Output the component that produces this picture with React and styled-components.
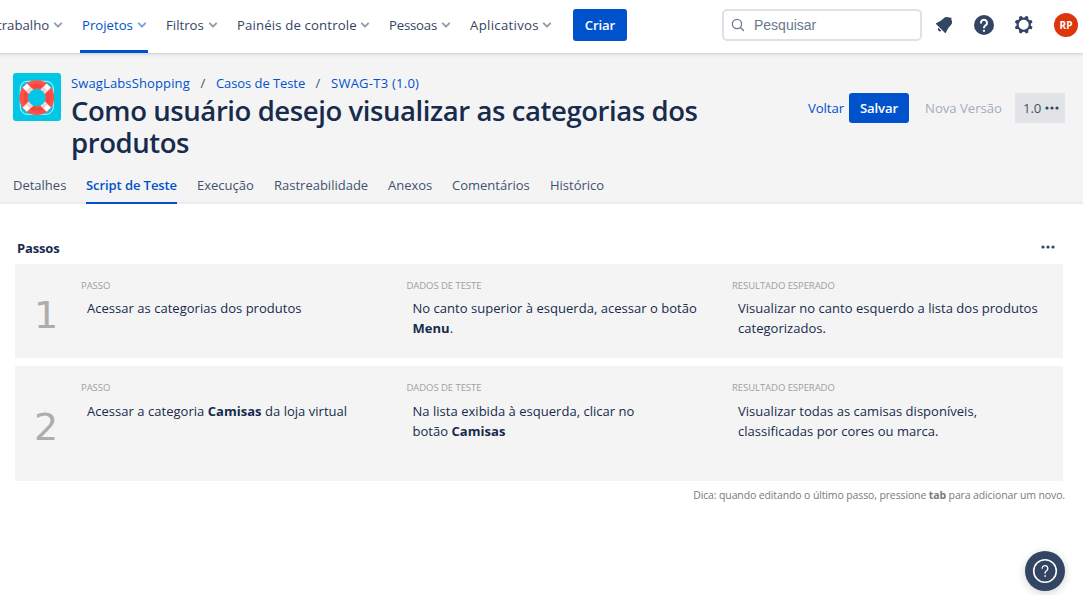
import React from "react";
import styled, { createGlobalStyle } from "styled-components";

const GlobalStyle = createGlobalStyle`
  * { box-sizing: border-box; }
  html, body { margin: 0; background: #fff; }
  body { font-family: "Open Sans", "Noto Sans", sans-serif; font-size: 13px; color: #172b4d; overflow: hidden; }
  button { font: inherit; border: 0; padding: 0; background: none; }
`;

const Page = styled.div`
  position: relative;
  width: 1083px;
  height: 595px;
  background: #fff;
  overflow: hidden;
`;

const TopBar = styled.header`
  display: flex;
  height: 53px;
  position: relative;
  background: #fff;
  box-shadow: 0 1px 0 #d4d7dd, 0 2px 3px rgba(9, 30, 66, 0.1);
`;

const Nav = styled.nav`
  display: flex;
  margin-left: -5px;
`;

const NavItem = styled.a`
  display: flex;
  align-items: center;
  width: ${(p) => p.$w}px;
  flex: none;
  padding: 0 1px 4px 2px;
  font-size: 13.2px;
  font-weight: 500;
  letter-spacing: ${(p) => p.$ls || 0}px;
  margin-right: 16px;
  white-space: nowrap;
  color: ${(p) => (p.$active ? "#0052cc" : "#344563")};
  box-shadow: ${(p) => (p.$active ? "inset 0 -3px 0 #0052cc" : "none")};
  svg { margin-left: auto; color: ${(p) => (p.$active ? "#7aa3e3" : "#969eae")}; }
`;

const Primary = styled.button`
  flex: none;
  width: ${(p) => p.$w}px;
  height: ${(p) => p.$h}px;
  border-radius: 3px;
  background: #0052cc;
  color: #fff;
  font-size: 13.2px;
  font-weight: 600;
  letter-spacing: ${(p) => p.$ls || 0}px;
`;

const CreateSlot = styled.div`
  padding: 9px 0 0 4px;
`;

const Tools = styled.div`
  display: flex;
  align-items: center;
  margin-left: auto;
  padding: 0 5px 3px 0;
`;

const Search = styled.div`
  display: flex;
  align-items: center;
  gap: 9px;
  width: 200px;
  height: 32px;
  margin-right: 10px;
  padding-left: 7px;
  border: 2px solid #dfe1e6;
  border-radius: 5px;
  color: #6b778c;
  font: 14px "Liberation Sans", Arial, sans-serif;
`;

const ToolIcon = styled.span`
  display: flex;
  justify-content: center;
  width: 24px;
  margin-right: 16px;
  color: #344563;
`;

const Avatar = styled.span`
  display: flex;
  align-items: center;
  justify-content: center;
  width: 24px;
  height: 24px;
  margin-left: 2px;
  border-radius: 50%;
  background: #de350b;
  color: #fff;
  font-size: 10px;
  font-weight: 700;
`;

const Head = styled.section`
  height: 151px;
  display: flex;
  flex-direction: column;
  background: #f4f4f4;
  border-bottom: 2px solid #ebecf0;
`;

const HeadMain = styled.div`
  display: flex;
  flex: none;
  padding: 20px 18px 0 13px;
  height: 111px;
`;

const HeadText = styled.div`
  width: 660px;
  margin-left: 10px;
`;

const Crumbs = styled.div`
  display: flex;
  line-height: 20px;
  height: 22px;
`;

const Crumb = styled.a`
  width: ${(p) => p.$w}px;
  white-space: nowrap;
  color: #0052cc;
  letter-spacing: ${(p) => p.$ls || 0}px;
`;

const Slash = styled.span`
  width: 26px;
  text-align: center;
  color: #42526e;
`;

const Title = styled.h1`
  margin: 0;
  font-size: 27.5px;
  line-height: 32px;
  font-weight: 600;
  letter-spacing: -0.42px;
`;

const Actions = styled.div`
  display: flex;
  align-items: center;
  height: 30px;
  margin: 20px 0 0 auto;
  font-size: 13.2px;
`;

const ActionText = styled.span`
  color: ${(p) => (p.$muted ? "#a5adba" : "#0052cc")};
  letter-spacing: ${(p) => p.$ls || 0}px;
  white-space: nowrap;
  width: ${(p) => p.$w}px;
  margin-left: ${(p) => p.$ml || 0}px;
`;

const Version = styled.button`
  display: flex;
  align-items: center;
  gap: 4px;
  width: 50px;
  height: 30px;
  padding-left: 8px;
  background: #e2e3e6;
  color: #42526e;
  letter-spacing: -0.1px;
`;

const Tabs = styled.div`
  display: flex;
  align-items: flex-start;
  gap: 20px;
  padding-left: 13px;
  height: 38px;
  flex: none;
`;

const Tab = styled.a`
  width: ${(p) => p.$w}px;
  height: 40px;
  line-height: 42px;
  white-space: nowrap;
  letter-spacing: ${(p) => p.$ls || 0}px;
  font-weight: ${(p) => (p.$active ? 600 : 400)};
  color: ${(p) => (p.$active ? "#0052cc" : "#42526e")};
  border-bottom: ${(p) => (p.$active ? "2px solid #0052cc" : "0")};
`;

const Body = styled.main`
  padding: 34px 20px 0 15px;
`;

const SectionHead = styled.div`
  display: flex;
  align-items: center;
  justify-content: space-between;
  height: 20px;
  margin-bottom: 6px;
  padding: 0 8px 0 2px;
  font-weight: 700;
  font-size: 13px;
  letter-spacing: -0.15px;
  svg { margin-bottom: 2px; }
`;

const Card = styled.article`
  display: flex;
  height: ${(p) => p.$h}px;
  margin-bottom: 8px;
  background: #f4f4f4;
`;

const Num = styled.div`
  width: 66px;
  padding: 7px 4px 0 0;
  display: flex;
  align-items: center;
  justify-content: center;
  flex: none;
  font-family: "DejaVu Sans", sans-serif;
  font-size: 38px;
  font-weight: 400;
  color: #adadad;
`;

const Col = styled.div`
  width: 325.5px;
  flex: none;
  padding-top: 15px;
`;

const Label = styled.div`
  height: 14px;
  line-height: 14px;
  font-size: 9.5px;
  color: #a0a0a0;
  letter-spacing: -0.06px;
`;

const Line = styled.div`
  padding-left: 6px;
  line-height: 20px;
  white-space: nowrap;
  letter-spacing: 0.03px;
`;

const Lines = styled.div`
  margin-top: ${(p) => p.$mt}px;
`;

const Hint = styled.p`
  margin: -1px -2px 0 0;
  text-align: right;
  font-size: 10.5px;
  color: #7a7a7a;
  letter-spacing: -0.125px;
`;

const HelpButton = styled.button`
  position: absolute;
  right: 18px;
  bottom: 4px;
  width: 40px;
  height: 40px;
  display: flex;
  border-radius: 50%;
  background: #344563;
  box-shadow: 0 2px 8px rgba(9, 30, 66, 0.2);
`;

const Logo = styled.svg`
  flex: none;
`;

const Chevron = () => (
  <svg width="10" height="8" viewBox="0 0 10 8" fill="none" stroke="currentColor" strokeWidth="2" strokeLinecap="round" strokeLinejoin="round">
    <path d="M1.8 2.4 5 5.6 8.2 2.4" />
  </svg>
);

const Dots = () => (
  <svg width="14" height="4" viewBox="0 0 14 4" fill="#344563">
    <circle cx="2" cy="2" r="1.6" /><circle cx="7" cy="2" r="1.6" /><circle cx="12" cy="2" r="1.6" />
  </svg>
);

const SearchIcon = () => (
  <svg width="14" height="14" viewBox="0 0 14 14" fill="none" stroke="currentColor" strokeWidth="1.3" strokeLinecap="round">
    <circle cx="6" cy="6" r="4.6" /><path d="m9.5 9.5 3 3" />
  </svg>
);

const Bell = () => (
  <svg width="24" height="24" viewBox="0 0 24 24" fill="currentColor">
    <path d="M6.485 17.669a2 2 0 002.829 0l-2.829-2.83a2 2 0 000 2.83zm4.897-12.191l-.725.725c-.782.782-2.21 1.813-3.206 2.311l-3.017 1.509c-.495.248-.584.774-.187 1.171l8.556 8.556c.398.396.922.313 1.171-.188l1.51-3.016c.494-.988 1.526-2.42 2.311-3.206l.725-.726a5.048 5.048 0 00.64-6.356 1.01 1.01 0 10-1.354-1.494c-.023.025-.046.049-.066.075a5.043 5.043 0 00-2.788-.84 5.036 5.036 0 00-3.57 1.478z" />
  </svg>
);

const Help = () => (
  <svg width="24" height="24" viewBox="0 0 24 24">
    <circle cx="12" cy="12" r="10" fill="currentColor" />
    <path d="M9 9.8a3 3 0 1 1 4.6 2.5c-1 .65-1.6 1-1.6 2.2" fill="none" stroke="#fff" strokeWidth="2" strokeLinecap="round" />
    <circle cx="12" cy="17.8" r="1.15" fill="#fff" />
  </svg>
);

const Gear = () => (
  <svg width="24" height="24" viewBox="0 0 24 24" fill="currentColor">
    <path d="M11.701 16.7a5.002 5.002 0 110-10.003 5.002 5.002 0 010 10.004m8.368-3.117a1.995 1.995 0 01-1.346-1.885c0-.876.563-1.613 1.345-1.885a.48.48 0 00.315-.574 8.947 8.947 0 00-.836-1.993.477.477 0 00-.598-.195 2.04 2.04 0 01-1.29.08 1.988 1.988 0 01-1.404-1.395 2.04 2.04 0 01.076-1.297.478.478 0 00-.196-.597 8.98 8.98 0 00-1.975-.826.479.479 0 00-.574.314 1.995 1.995 0 01-1.885 1.346 1.994 1.994 0 01-1.884-1.345.482.482 0 00-.575-.315c-.708.2-1.379.485-2.004.842a.47.47 0 00-.198.582A2.002 2.002 0 014.445 7.06a.478.478 0 00-.595.196 8.946 8.946 0 00-.833 1.994.48.48 0 00.308.572 1.995 1.995 0 011.323 1.877c0 .867-.552 1.599-1.324 1.877a.479.479 0 00-.308.57 8.99 8.99 0 00.723 1.79.477.477 0 00.624.194c.595-.273 1.343-.264 2.104.238.117.077.225.185.302.3.527.8.512 1.58.198 2.188a.473.473 0 00.168.628 8.946 8.946 0 002.11.897.474.474 0 00.57-.313 1.995 1.995 0 011.886-1.353c.878 0 1.618.567 1.887 1.353a.474.474 0 00.57.313 8.964 8.964 0 002.084-.883.473.473 0 00.167-.631c-.318-.608-.337-1.393.191-2.195.077-.116.185-.225.302-.302.772-.511 1.527-.513 2.125-.23a.477.477 0 00.628-.19 8.925 8.925 0 00.728-1.793.478.478 0 00-.314-.573" />
  </svg>
);

const Lifebuoy = () => (
  <Logo width="48" height="48" viewBox="0 0 48 48">
    <rect width="48" height="48" rx="3" fill="#00c7e5" />
    <rect x="7.3" y="8.3" width="33" height="33" rx="7" fill="none" stroke="#c5f3fa" strokeWidth="1" />
    <circle cx="23.8" cy="24.6" r="13" fill="none" stroke="#ff5148" strokeWidth="8.8" />
    <circle cx="23.8" cy="24.6" r="11.5" fill="none" stroke="#f5443f" strokeWidth="3.5" />
    <g transform="rotate(45 23.8 24.6)">
      <g fill="#fff">
        <rect x="20.8" y="7.6" width="6" height="9" /><rect x="20.8" y="32.6" width="6" height="9" />
        <rect x="6.8" y="21.6" width="9" height="6" /><rect x="31.8" y="21.6" width="9" height="6" />
      </g>
      <g fill="#f3cfcf">
        <rect x="20.8" y="12.3" width="6" height="4" /><rect x="20.8" y="32.9" width="6" height="4" />
        <rect x="11.5" y="21.6" width="4" height="6" /><rect x="32.1" y="21.6" width="4" height="6" />
      </g>
    </g>
    <circle cx="23.8" cy="24.6" r="8.7" fill="#00c7e5" />
  </Logo>
);

const steps = [
  {
    h: 94, mt: 5,
    cols: [
      ["PASSO", ["Acessar as categorias dos produtos"]],
      ["DADOS DE TESTE", ["No canto superior à esquerda, acessar o botão", <><b>Menu</b>.</>]],
      ["RESULTADO ESPERADO", ["Visualizar no canto esquerdo a lista dos produtos", "categorizados."]],
    ],
  },
  {
    h: 115, mt: 6,
    cols: [
      ["PASSO", [<>Acessar a categoria <b>Camisas</b> da loja virtual</>]],
      ["DADOS DE TESTE", ["Na lista exibida à esquerda, clicar no", <>botão <b>Camisas</b></>]],
      ["RESULTADO ESPERADO", ["Visualizar todas as camisas disponíveis,", "classificadas por cores ou marca."]],
    ],
  },
];

const nav = [
  { text: "trabalho", w: 69 },
  { text: "Projetos", w: 68, active: true },
  { text: "Filtros", w: 55 },
  { text: "Painéis de controle", w: 136, ls: 0.14 },
  { text: "Pessoas", w: 65, ls: -0.2 },
  { text: "Aplicativos", w: 85, ls: 0.3 },
];

const tabs = [
  { text: "Detalhes", w: 53 },
  { text: "Script de Teste", w: 91, active: true, ls: -0.08 },
  { text: "Execução", w: 57 },
  { text: "Rastreabilidade", w: 94 },
  { text: "Anexos", w: 44 },
  { text: "Comentários", w: 78 },
  { text: "Histórico", w: 55 },
];

export default function App() {
  return (
    <Page>
      <GlobalStyle />
      <TopBar>
        <Nav>
          {nav.map((n) => (
            <NavItem key={n.text} $w={n.w} $ls={n.ls} $active={n.active}>{n.text}<Chevron /></NavItem>
          ))}
        </Nav>
        <CreateSlot><Primary $w={54} $h={32} $ls={-0.15}>Criar</Primary></CreateSlot>
        <Tools>
          <Search><SearchIcon />Pesquisar</Search>
          <ToolIcon><Bell /></ToolIcon>
          <ToolIcon><Help /></ToolIcon>
          <ToolIcon><Gear /></ToolIcon>
          <Avatar>RP</Avatar>
        </Tools>
      </TopBar>
      <Head>
        <HeadMain>
          <Lifebuoy />
          <HeadText>
            <Crumbs>
              <Crumb $w={119} $ls={0.13}>SwagLabsShopping</Crumb><Slash>/</Slash>
              <Crumb $w={89} $ls={-0.08}>Casos de Teste</Crumb><Slash>/</Slash>
              <Crumb $w={89} $ls={0.25}>SWAG-T3 (1.0)</Crumb>
            </Crumbs>
            <Title>Como usuário desejo visualizar as categorias dos produtos</Title>
          </HeadText>
          <Actions>
            <ActionText $w={41} $ml={1} $ls={-0.1}>Voltar</ActionText>
            <Primary $w={60} $h={30} $ls={-0.15}>Salvar</Primary>
            <ActionText $w={90} $ml={16} $ls={-0.04} $muted>Nova Versão</ActionText>
            <Version>1.0<Dots /></Version>
          </Actions>
        </HeadMain>
        <Tabs>
          {tabs.map((t) => <Tab key={t.text} $w={t.w} $ls={t.ls} $active={t.active}>{t.text}</Tab>)}
        </Tabs>
      </Head>
      <Body>
        <SectionHead>Passos<Dots /></SectionHead>
        {steps.map((s, i) => (
          <Card key={i} $h={s.h}>
            <Num>{i + 1}</Num>
            {s.cols.map(([label, lines]) => (
              <Col key={label}>
                <Label>{label}</Label>
                <Lines $mt={s.mt}>{lines.map((l, j) => <Line key={j}>{l}</Line>)}</Lines>
              </Col>
            ))}
          </Card>
        ))}
        <Hint>Dica: quando editando o último passo, pressione <b>tab</b> para adicionar um novo.</Hint>
      </Body>
      <HelpButton aria-label="Ajuda">
        <svg width="40" height="40" viewBox="0 0 40 40" fill="none" stroke="#fff" strokeLinecap="round">
          <circle cx="20" cy="20" r="11.3" strokeWidth="1.6" />
          <path d="M17.2 17.3a2.8 2.8 0 1 1 4.6 2.2c-1 .8-1.8 1.3-1.8 2.7" strokeWidth="1.3" />
          <circle cx="20" cy="25" r=".5" fill="#fff" strokeWidth=".6" />
        </svg>
      </HelpButton>
    </Page>
  );
}
